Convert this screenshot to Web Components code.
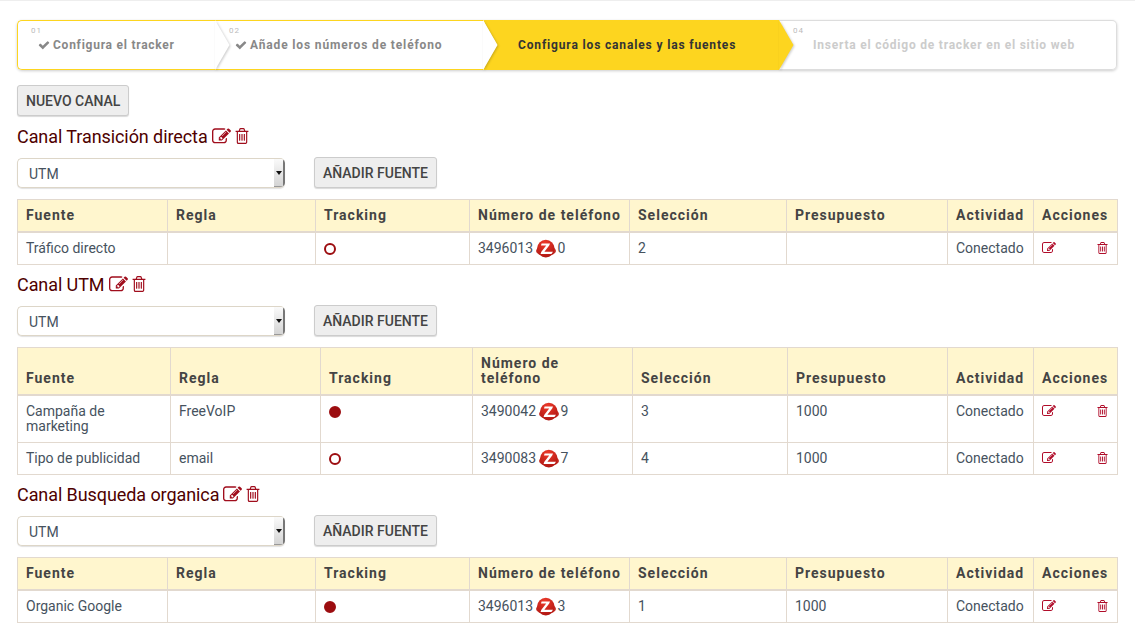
<!DOCTYPE html>
<html lang="es">
<head>
<meta charset="utf-8">
<title>Canales</title>
<style>
html,body{margin:0;background:#fff;}
body{
border-top:1px solid #eee;
padding:19px 18px 0 17px;
font-family:Roboto,"Liberation Sans",sans-serif;
font-size:14px;
color:#46525e;
height:613px;
overflow:hidden;
}
</style>
</head>
<body>
<step-bar>
<step-item num="01" state="done" style="width:198px;letter-spacing:.75px">Configura el tracker</step-item>
<step-item num="02" state="done" style="width:268px">Añade los números de teléfono</step-item>
<step-item num="03" state="active" style="width:296px">Configura los canales y las fuentes</step-item>
<step-item num="04" state="todo" style="flex:1;letter-spacing:.78px">Inserta el código de tracker en el sitio web</step-item>
</step-bar>

<action-button style="margin-top:15px">Nuevo canal</action-button>

<channel-block name="Transición directa" style="margin-top:9px">
<source-table widths="150,148,154,160,157,161,86,84" rows='[["Tráfico directo","","off","3496013|0","2","","Conectado"]]'></source-table>
</channel-block>

<channel-block name="UTM">
<source-table wrap widths="153,150,152,160,155,160,86,84" rows='[["Campaña de marketing","FreeVoIP","on","3490042|9","3","1000","Conectado"],["Tipo de publicidad","email","off","3490083|7","4","1000","Conectado"]]'></source-table>
</channel-block>

<channel-block name="Busqueda organica">
<source-table widths="150,148,154,160,157,161,86,84" rows='[["Organic Google","","on","3496013|3","1","1000","Conectado"]]'></source-table>
</channel-block>

<script>
const EDIT_D="M888 1184l116-116-152-152-116 116v56h96v96h56zm440-720q-16-16-33 1l-350 350q-17 17-1 33t33-1l350-350q17-17 1-33zm80 594v190q0 119-84.5 203.5t-203.5 84.5h-832q-119 0-203.5-84.5t-84.5-203.5v-832q0-119 84.5-203.5t203.5-84.5h832q63 0 117 25 15 7 18 23 3 17-9 29l-49 49q-14 14-32 8-23-6-45-6h-832q-66 0-113 47t-47 113v832q0 66 47 113t113 47h832q66 0 113-47t47-113v-126q0-13 9-22l64-64q15-15 35-7t20 29zm-96-738l288 288-672 672h-288v-288zm444 132l-92 92-288-288 92-92q28-28 68-28t68 28l152 152q28 28 28 68t-28 68z";
const TRASH_D="M704 736v576q0 14-9 23t-23 9h-64q-14 0-23-9t-9-23v-576q0-14 9-23t23-9h64q14 0 23 9t9 23zm256 0v576q0 14-9 23t-23 9h-64q-14 0-23-9t-9-23v-576q0-14 9-23t23-9h64q14 0 23 9t9 23zm256 0v576q0 14-9 23t-23 9h-64q-14 0-23-9t-9-23v-576q0-14 9-23t23-9h64q14 0 23 9t9 23zm128 724v-948h-896v948q0 22 7 40.5t14.5 27 10.5 8.5h832q3 0 10.5-8.5t14.5-27 7-40.5zm-672-1076h448l-48-117q-7-9-17-11h-317q-10 2-17 11zm928 32v64q0 14-9 23t-23 9h-96v948q0 83-47 143.5t-113 60.5h-832q-66 0-113-58.5t-47-141.5v-952h-96q-14 0-23-9t-9-23v-64q0-14 9-23t23-9h309l70-167q15-37 54-63t79-26h320q40 0 79 26t54 63l70 167h309q14 0 23 9t9 23z";
const CHECK_D="M1671 566q0 40-28 68l-724 724-136 136q-28 28-68 28t-68-28l-136-136-362-362q-28-28-28-68t28-68l136-136q28-28 68-28t68 28l294 295 656-657q28-28 68-28t68 28l136 136q28 28 28 68z";

class FaIcon extends HTMLElement{
    connectedCallback(){
        const name=this.getAttribute("name");
        const d={edit:EDIT_D,trash:TRASH_D,check:CHECK_D}[name];
        const w=this.getAttribute("w");
        const h=this.getAttribute("h")||w;
        // trash glyph is narrower in the real font, so it gets squeezed to w x h
        const box=name=="trash"?"128 128 1536 1536":"0 0 1792 1792";
        const ratio=name=="trash"?'preserveAspectRatio="none"':'';
        this.attachShadow({mode:'open'}).innerHTML=`
<style>:host{display:inline-flex;line-height:0;flex:none;}</style>
<svg width="${w}" height="${h}" viewBox="${box}" ${ratio} fill="currentColor"><path d="${d}"/></svg>`;
    }
}
customElements.define('fa-icon',FaIcon);

const barTemplate=document.createElement('template');
barTemplate.innerHTML=`
<style>
:host{
display:flex;
height:50px;
border-radius:5px;
box-shadow:0 1px 3px rgba(0,0,0,.2);
background:#fff;
}
</style>
<slot></slot>`;
class StepBar extends HTMLElement{
    constructor(){
        super();
        this.attachShadow({mode:'open'}).append(barTemplate.content.cloneNode(true));
    }
}
customElements.define('step-bar',StepBar);

class StepItem extends HTMLElement{
    connectedCallback(){
        const state=this.getAttribute("state");
        const num=this.getAttribute("num");
        const check=state=="done"?'<fa-icon name="check" w="12"></fa-icon>':'';
        this.attachShadow({mode:'open'}).innerHTML=`
<style>
:host{
display:block;
position:relative;
box-sizing:border-box;
height:50px;
font-size:12px;
font-weight:700;
letter-spacing:.85px;
white-space:nowrap;
}
.box{
box-sizing:border-box;
height:100%;
padding:17px 0 0 21px;
display:flex;
gap:3px;
align-items:flex-start;
line-height:16px;
}
.num{
position:absolute;
left:14px;
top:6px;
font-size:8px;
font-weight:400;
line-height:10px;
letter-spacing:1px;
color:#bbb;
}
fa-icon{margin-top:2px;}
.arrow{
position:absolute;
left:100%;
top:0;
width:15px;
height:50px;
z-index:2;
overflow:visible;
}
:host([state=done]) .box{
color:#888;
border:solid #fdd51f;
border-width:1px 0;
padding:16px 0 0 20px;
}
:host([state=done]:first-child) .box{
border-left-width:1px;
border-radius:5px 0 0 5px;
padding-left:20px;
}
:host([state=active]) .box{
background:#fdd51f;
color:#333;
padding:17px 0 0 35px;
clip-path:polygon(0 0,100% 0,100% 100%,0 100%,14px 25px);
}
:host([state=active]) .num{color:#bfa52d;}
:host([state=todo]) .box{
color:#ccc;
border:solid #ddd;
border-width:1px 1px 1px 0;
border-radius:0 5px 5px 0;
padding:16px 0 0 34px;
}
</style>
<span class="num">${num}</span>
<div class="box">${check}<span><slot></slot></span></div>
${state!="todo"?`<svg class="arrow" viewBox="0 0 15 50" style="filter:drop-shadow(1px 1px 1px rgba(0,0,0,.2))">
<polygon points="0,0 14.5,25 0,50" fill="${state=="active"?"#fdd51f":"#fff"}"/>
</svg>`:''}`;
    }
}
customElements.define('step-item',StepItem);

const buttonTemplate=document.createElement('template');
buttonTemplate.innerHTML=`
<style>
:host{display:inline-block;vertical-align:top;}
button{
display:block;
height:31px;
padding:0 8px;
background:#eee;
border:1px solid #ccc;
border-radius:3px;
box-shadow:0 1px 1px rgba(0,0,0,.15);
font-family:Roboto,"Liberation Sans",sans-serif;
font-size:14px;
font-weight:500;
color:#444;
text-transform:uppercase;
white-space:nowrap;
}
</style>
<button><slot></slot></button>`;
class ActionButton extends HTMLElement{
    constructor(){
        super();
        this.attachShadow({mode:'open'}).append(buttonTemplate.content.cloneNode(true));
    }
}
customElements.define('action-button',ActionButton);

class SourceSelect extends HTMLElement{
    connectedCallback(){
        this.attachShadow({mode:'open'}).innerHTML=`
<style>
:host{display:block;width:268px;}
.sel{
box-sizing:border-box;
height:30px;
display:flex;
align-items:center;
justify-content:space-between;
padding-left:11px;
background:#fff;
border:1px solid #ddd6c8;
border-right:0;
border-radius:5px;
box-shadow:0 1px 1px rgba(0,0,0,.12);
font-size:14px;
color:#46525e;
overflow:hidden;
}
.sel>span:first-child{padding-top:2px;}
.spin{
width:11px;
height:28px;
box-sizing:border-box;
background:linear-gradient(#fafafa,#d4d4d4);
border-right:2px solid #777;
border-bottom:1px solid #999;
display:flex;
align-items:center;
justify-content:center;
}
.spin i{
display:block;
width:0;
border:solid transparent;
border-width:4px 3.5px 0;
border-top-color:#111;
}
</style>
<div class="sel"><span>UTM</span><span class="spin"><i></i></span></div>`;
    }
}
customElements.define('source-select',SourceSelect);

class ChannelBlock extends HTMLElement{
    connectedCallback(){
        this.attachShadow({mode:'open'}).innerHTML=`
<style>
:host{display:block;margin-top:8px;}
h3{
margin:0;
display:flex;
align-items:center;
height:22px;
font-size:18px;
font-weight:400;
letter-spacing:-.08px;
color:#4f0000;
}
h3 fa-icon{color:#a00d1c;margin-left:4px;}
.tools{
display:flex;
align-items:flex-start;
gap:29px;
margin:10px 0 11px;
}
.tools source-select{margin-top:1px;}
</style>
<h3>Canal ${this.getAttribute("name")}<fa-icon name="edit" w="19"></fa-icon><fa-icon name="trash" w="14" h="16"></fa-icon></h3>
<div class="tools"><source-select></source-select><action-button>Añadir fuente</action-button></div>
<slot></slot>`;
    }
}
customElements.define('channel-block',ChannelBlock);

let logoCount=0;
class PhoneNumber extends HTMLElement{
    connectedCallback(){
        const [a,b]=this.getAttribute("value").split("|");
        const id="g"+(logoCount++);
        this.attachShadow({mode:'open'}).innerHTML=`
<style>
:host{display:inline-flex;align-items:center;height:15px;}
svg{margin:0 2px 0 2.5px;flex:none;}
</style>
<span>${a}</span>
<svg width="20" height="20" viewBox="0 0 20 20">
<defs><radialGradient id="${id}" cx=".45" cy=".2" r=".9"><stop offset="0" stop-color="#ef3b2b"/><stop offset="1" stop-color="#a8120f"/></radialGradient></defs>
<ellipse cx="10" cy="12" rx="10" ry="4.8" fill="#c22a22"/>
<circle cx="9.8" cy="9.6" r="8.8" fill="url(#${id})"/>
<path d="M5.6 4.4H14L13.2 6.4 8.4 12.8H17L15.4 15H4.6L5.2 13 10.2 6.6H5z" fill="#fff"/>
</svg>
<span>${b}</span>`;
    }
}
customElements.define('phone-number',PhoneNumber);

class TrackDot extends HTMLElement{
    connectedCallback(){
        this.attachShadow({mode:'open'}).innerHTML=`
<style>
:host{display:block;width:12px;height:12px;box-sizing:border-box;border-radius:50%;border:2px solid #9c0d10;margin:2px 0 0 0;}
:host([on]){background:#9c0d10;}
</style>`;
    }
}
customElements.define('track-dot',TrackDot);

const HEADS=["Fuente","Regla","Tracking","Número de teléfono","Selección","Presupuesto","Actividad","Acciones"];
class SourceTable extends HTMLElement{
    connectedCallback(){
        const widths=this.getAttribute("widths").split(",");
        const rows=JSON.parse(this.getAttribute("rows"));
        const cols=widths.map(w=>`<col style="width:${w}px">`).join("");
        const wrap=this.hasAttribute("wrap");
        const head=HEADS.map(h=>`<th>${wrap?h.replace("de teléfono","de<br>teléfono"):h}</th>`).join("");
        const body=rows.map(r=>`<tr>
<td>${r[0]}</td>
<td>${r[1]}</td>
<td><track-dot ${r[2]=="on"?"on":""}></track-dot></td>
<td><phone-number value="${r[3]}"></phone-number></td>
<td>${r[4]}</td>
<td>${r[5]}</td>
<td>${r[6]}</td>
<td><div class="acts"><fa-icon name="edit" w="14"></fa-icon><fa-icon name="trash" w="11" h="12"></fa-icon></div></td>
</tr>`).join("");
        this.attachShadow({mode:'open'}).innerHTML=`
<style>
:host{display:block;}
table{
width:1100px;
table-layout:fixed;
border-collapse:collapse;
font-size:14px;
line-height:15px;
color:#46525e;
}
th,td{
border:1px solid #e2d9cf;
padding:8px;
text-align:left;
}
th{
background:#fff6ce;
border-bottom:2px solid #e2d9cf;
font-weight:700;
letter-spacing:1px;
color:#444;
vertical-align:bottom;
white-space:nowrap;
}
td{vertical-align:top;}
.acts{display:flex;justify-content:space-between;align-items:center;color:#b00d2a;padding-right:1px;}
</style>
<table><colgroup>${cols}</colgroup><thead><tr>${head}</tr></thead><tbody>${body}</tbody></table>`;
    }
}
customElements.define('source-table',SourceTable);
</script>
</body>
</html>
